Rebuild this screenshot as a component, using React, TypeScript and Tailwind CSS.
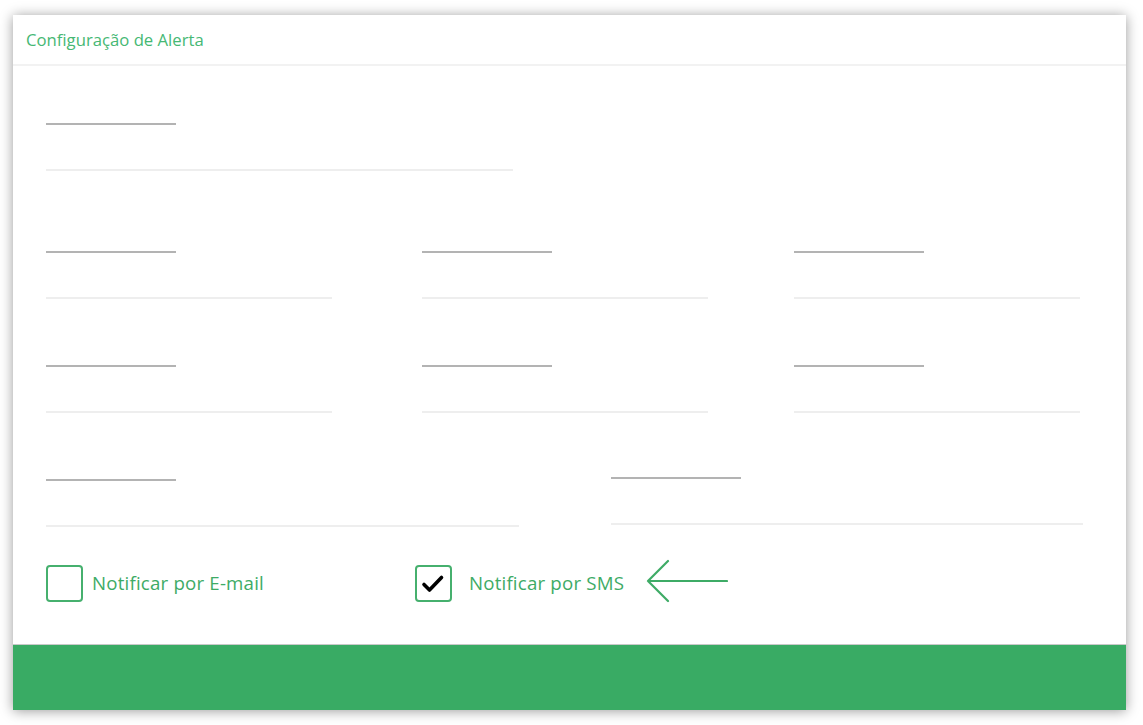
import React from "react";

const font = { fontFamily: '"Open Sans", "Noto Sans", sans-serif' };

function Field({ long = "w-[286px]", className = "" }: { long?: string; className?: string }) {
  return (
    <div className={className}>
      <div className="h-[2px] w-[130px] bg-[#b3b3b3]" />
      <div className={`mt-[44px] h-[2px] bg-[#eeeeee] ${long}`} />
    </div>
  );
}

function Checkbox({ checked }: { checked?: boolean }) {
  return (
    <div className="flex h-[37px] w-[37px] shrink-0 items-center justify-center rounded-[4px] border-2 border-[#46b06e] bg-white">
      {checked && (
        <svg width="24" height="20" viewBox="0 0 24 20" fill="none">
          <path d="M3 10.5 L8.5 16 L20.5 3.5" stroke="#000" strokeWidth="3.6" strokeLinecap="round" strokeLinejoin="round" />
        </svg>
      )}
    </div>
  );
}

export default function App() {
  return (
    <div className="min-h-screen bg-white pt-[15px] pl-[13px]" style={font}>
      <div className="flex h-[695px] w-[1113px] flex-col bg-white shadow-[0_1px_12px_rgba(0,0,0,0.4)]">
        {/* header */}
        <div className="flex h-[51px] items-center border-b-2 border-[#f2f2f2] pl-[13px] pt-[1px]">
          <span className="text-[16.7px] text-[#46b874]">Configuração de Alerta</span>
        </div>

        {/* form */}
        <div className="flex-1 pl-[33px] pt-[57px]">
          <Field long="w-[467px]" />

          <div className="mt-[80px] flex">
            <Field />
            <Field className="ml-[90px]" />
            <Field className="ml-[86px]" />
          </div>

          <div className="mt-[66px] flex">
            <Field />
            <Field className="ml-[90px]" />
            <Field className="ml-[86px]" />
          </div>

          <div className="mt-[64px] flex items-start">
            <Field long="w-[473px]" className="mt-[2px]" />
            <Field long="w-[472px]" className="ml-[92px]" />
          </div>

          <div className="mt-[38px] flex h-[37px] items-center">
            <Checkbox />
            <span className="ml-[9px] text-[18.7px] tracking-[0.01em] text-[#3eab66]">Notificar por E-mail</span>
            <div className="ml-[151px]">
              <Checkbox checked />
            </div>
            <span className="ml-[17px] text-[18.7px] tracking-[0.01em] text-[#3eab66]">Notificar por SMS</span>
            <svg className="ml-[22px] -translate-y-[3px]" width="82" height="44" viewBox="0 0 82 44" fill="none">
              <path d="M81 22 H2 M22 2 L2 22 L22 42" stroke="#3eab66" strokeWidth="2.2" strokeLinecap="round" strokeLinejoin="round" />
            </svg>
          </div>
        </div>

        {/* footer */}
        <div className="h-[66px] border-t border-[#c9c9c9] bg-[#39ab64]" />
      </div>
    </div>
  );
}
